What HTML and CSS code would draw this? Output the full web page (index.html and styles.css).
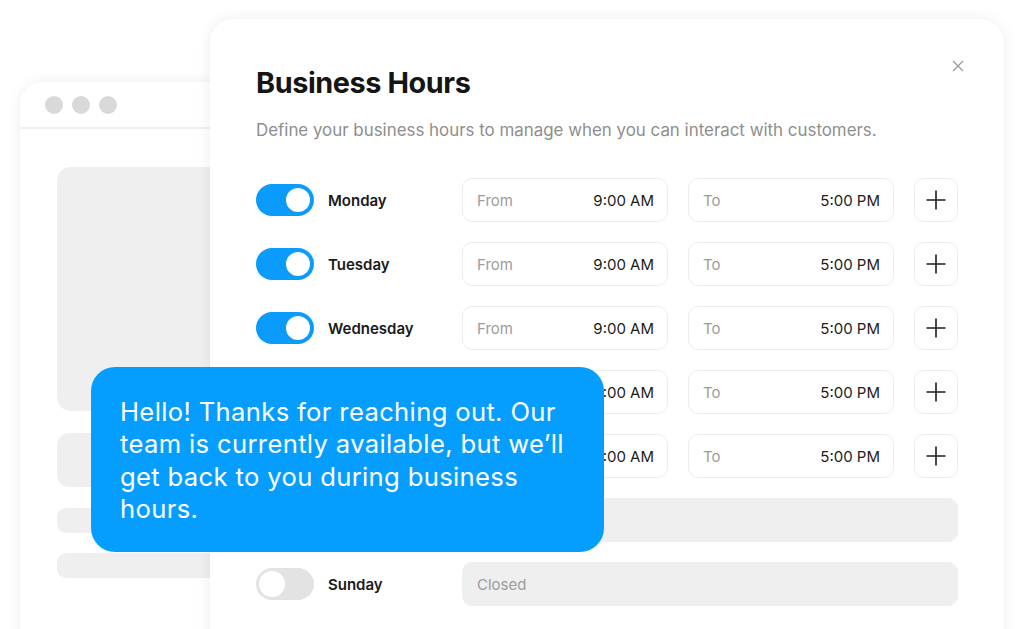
FILE: index.html
```html
<!DOCTYPE html>
<html lang="en">
<head>
<meta charset="utf-8">
<title>Business Hours</title>
<link rel="stylesheet" href="styles.css">
</head>
<body>
<div class="stage">
  <div class="browser">
    <div class="browser-bar">
      <span class="dot"></span><span class="dot"></span><span class="dot"></span>
    </div>
    <div class="browser-body">
      <div class="ph ph-big"></div>
      <div class="ph ph-mid"></div>
      <div class="ph ph-line"></div>
      <div class="ph ph-line"></div>
    </div>
  </div>

  <div class="card">
    <button class="close" aria-label="Close">
      <svg width="12" height="12" viewBox="0 0 12 12"><path d="M1 1L11 11M11 1L1 11" stroke="#9a9a9a" stroke-width="1.3" fill="none"/></svg>
    </button>
    <h1 class="title">Business Hours</h1>
    <p class="subtitle">Define your business hours to manage when you can interact with customers.</p>

    <div class="rows">
      <div class="row">
        <div class="day"><span class="toggle on"><span class="knob"></span></span><span class="day-name">Monday</span></div>
        <div class="field"><span class="label">From</span><span class="value">9:00 AM</span></div>
        <div class="field"><span class="label">To</span><span class="value">5:00 PM</span></div>
        <button class="add"><svg width="22" height="22" viewBox="0 0 22 22"><path d="M11 1.5V20.5M1.5 11H20.5" stroke="#1f1f1f" stroke-width="1.6" fill="none"/></svg></button>
      </div>
      <div class="row">
        <div class="day"><span class="toggle on"><span class="knob"></span></span><span class="day-name">Tuesday</span></div>
        <div class="field"><span class="label">From</span><span class="value">9:00 AM</span></div>
        <div class="field"><span class="label">To</span><span class="value">5:00 PM</span></div>
        <button class="add"><svg width="22" height="22" viewBox="0 0 22 22"><path d="M11 1.5V20.5M1.5 11H20.5" stroke="#1f1f1f" stroke-width="1.6" fill="none"/></svg></button>
      </div>
      <div class="row">
        <div class="day"><span class="toggle on"><span class="knob"></span></span><span class="day-name">Wednesday</span></div>
        <div class="field"><span class="label">From</span><span class="value">9:00 AM</span></div>
        <div class="field"><span class="label">To</span><span class="value">5:00 PM</span></div>
        <button class="add"><svg width="22" height="22" viewBox="0 0 22 22"><path d="M11 1.5V20.5M1.5 11H20.5" stroke="#1f1f1f" stroke-width="1.6" fill="none"/></svg></button>
      </div>
      <div class="row">
        <div class="day"><span class="toggle on"><span class="knob"></span></span><span class="day-name">Thursday</span></div>
        <div class="field"><span class="label">From</span><span class="value">9:00 AM</span></div>
        <div class="field"><span class="label">To</span><span class="value">5:00 PM</span></div>
        <button class="add"><svg width="22" height="22" viewBox="0 0 22 22"><path d="M11 1.5V20.5M1.5 11H20.5" stroke="#1f1f1f" stroke-width="1.6" fill="none"/></svg></button>
      </div>
      <div class="row">
        <div class="day"><span class="toggle on"><span class="knob"></span></span><span class="day-name">Friday</span></div>
        <div class="field"><span class="label">From</span><span class="value">9:00 AM</span></div>
        <div class="field"><span class="label">To</span><span class="value">5:00 PM</span></div>
        <button class="add"><svg width="22" height="22" viewBox="0 0 22 22"><path d="M11 1.5V20.5M1.5 11H20.5" stroke="#1f1f1f" stroke-width="1.6" fill="none"/></svg></button>
      </div>
      <div class="row">
        <div class="day"><span class="toggle"><span class="knob"></span></span><span class="day-name">Saturday</span></div>
        <div class="field closed"><span class="label">Closed</span></div>
      </div>
      <div class="row">
        <div class="day"><span class="toggle"><span class="knob"></span></span><span class="day-name">Sunday</span></div>
        <div class="field closed"><span class="label">Closed</span></div>
      </div>
    </div>
  </div>

  <div class="bubble">Hello! Thanks for reaching out. Our team is currently available, but we’ll get back to you during business hours.</div>
</div>
</body>
</html>
```

FILE: styles.css
```css
* { box-sizing: border-box; }
html, body { margin: 0; padding: 0; }
body {
  background: #ffffff;
  font-family: Inter, "Noto Sans", "Liberation Sans", sans-serif;
  color: #1a1a1a;
  width: 1024px;
  height: 629px;
  overflow: hidden;
}
.stage {
  position: relative;
  width: 1024px;
  height: 629px;
  overflow: hidden;
}

/* background browser window */
.browser {
  position: absolute;
  left: 20px;
  top: 82px;
  width: 320px;
  height: 600px;
  background: #fff;
  border-radius: 22px;
  box-shadow: 0 0 14px rgba(0,0,0,0.07);
}
.browser-bar {
  height: 47px;
  border-bottom: 2px solid #efefef;
  display: flex;
  align-items: center;
  gap: 9px;
  padding-left: 25px;
}
.dot {
  width: 18px;
  height: 18px;
  border-radius: 50%;
  background: #d9d9d9;
}
.browser-body {
  padding: 38px 0 0 37px;
  display: flex;
  flex-direction: column;
}
.ph { background: #efefef; width: 260px; }
.ph-big { height: 244px; border-radius: 14px; }
.ph-mid { height: 54px; border-radius: 12px; margin-top: 22px; }
.ph-line { height: 25px; border-radius: 9px; margin-top: 21px; }
.ph-line + .ph-line { margin-top: 20px; }

/* main card */
.card {
  position: absolute;
  left: 210px;
  top: 19px;
  width: 794px;
  height: 680px;
  background: #fff;
  border-radius: 24px;
  box-shadow: 0 0 16px rgba(0,0,0,0.07);
  padding: 46px 46px 0 46px;
}
.close {
  position: absolute;
  top: 39px;
  right: 38px;
  width: 16px;
  height: 16px;
  padding: 0;
  border: 0;
  background: none;
  display: flex;
  align-items: center;
  justify-content: center;
}
.title {
  margin: 0;
  font-size: 28.8px;
  line-height: 36px;
  font-weight: 700;
  letter-spacing: -0.4px;
  color: #151515;
}
.subtitle {
  margin: 17px 0 0 0;
  font-size: 16.9px;
  line-height: 24px;
  color: #8e8e8e;
}
.rows {
  margin-top: 36px;
  display: flex;
  flex-direction: column;
  gap: 20px;
}
.row {
  display: flex;
  align-items: center;
  height: 44px;
  gap: 20px;
}
.day {
  width: 186px;
  display: flex;
  align-items: center;
  gap: 14px;
}
.toggle {
  width: 58px;
  height: 32px;
  border-radius: 16px;
  background: #0a9bfb;
  position: relative;
  flex: none;
}
.knob {
  position: absolute;
  top: 4px;
  left: 30px;
  width: 24px;
  height: 24px;
  border-radius: 50%;
  background: #fff;
}
.toggle:not(.on) { background: #e3e3e3; }
.toggle:not(.on) .knob { left: 3px; top: 3px; width: 26px; height: 26px; }
.day-name {
  font-size: 15px;
  font-weight: 600;
  color: #1a1a1a;
}
.field {
  width: 206px;
  height: 44px;
  border: 1px solid #ececec;
  border-radius: 10px;
  display: flex;
  align-items: center;
  justify-content: space-between;
  padding: 0 13px 0 14px;
  font-size: 15px;
}
.label { color: #9c9c9c; }
.value { color: #1c1c1c; }
.field.closed {
  width: 496px;
  background: #efefef;
  border-color: #efefef;
}
.add {
  width: 44px;
  height: 44px;
  border: 1px solid #ececec;
  border-radius: 10px;
  background: #fff;
  padding: 0;
  display: flex;
  align-items: center;
  justify-content: center;
}

/* chat bubble overlay */
.bubble {
  position: absolute;
  left: 91px;
  top: 367px;
  width: 513px;
  height: 185px;
  background: #059efe;
  border-radius: 24px;
  color: #fff;
  font-size: 25.6px;
  line-height: 32.4px;
  font-weight: 400;
  letter-spacing: 0.35px;
  padding: 29px 20px 0 29px;
}
```
